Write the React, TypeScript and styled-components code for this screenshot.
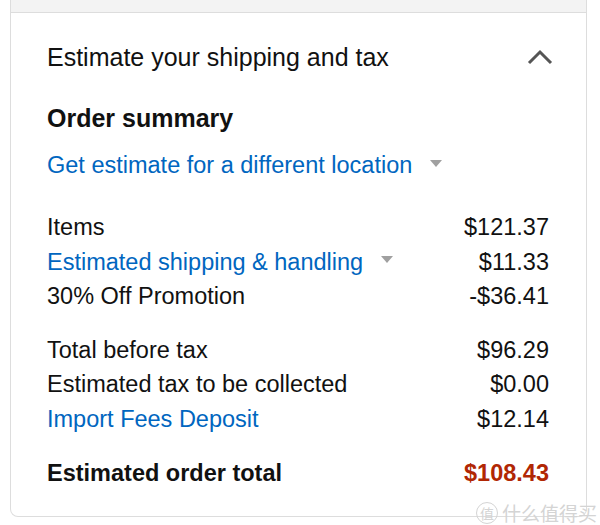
import styled, { createGlobalStyle } from "styled-components";

const GlobalStyle = createGlobalStyle`
  body {
    margin: 0;
    background: #fff;
    font-family: "Liberation Sans", Arial, sans-serif;
    color: #111;
  }
`;

const rows = [
  { label: "Items", value: "$121.37" },
  { label: "Estimated shipping & handling", value: "$11.33", link: true, caret: true },
  { label: "30% Off Promotion", value: "-$36.41" },
];

const rows2 = [
  { label: "Total before tax", value: "$96.29" },
  { label: "Estimated tax to be collected", value: "$0.00" },
  { label: "Import Fees Deposit", value: "$12.14", link: true },
];

const Caret = () => (
  <CaretSvg width="12" height="7" viewBox="0 0 12 7">
    <path d="M0 0 H12 L6 7 Z" fill="#a0a0a0" />
  </CaretSvg>
);

export default function App() {
  return (
    <Page>
      <GlobalStyle />
      <BoxGroup>
        <PrevBox />
        <Card>
          <Header>
            <Title>Estimate your shipping and tax</Title>
            <svg width="26" height="16" viewBox="0 0 26 16">
              <path d="M2 14 L13 3 L24 14" fill="none" stroke="#555" strokeWidth="3" />
            </svg>
          </Header>
          <Heading>Order summary</Heading>
          <LocationLink>
            <Link>Get estimate for a different location</Link>
            <Caret />
          </LocationLink>
          <Group>
            {rows.map((r) => (
              <Row key={r.label}>
                <Label>
                  {r.link ? <Link>{r.label}</Link> : r.label}
                  {r.caret && <Caret />}
                </Label>
                <Value>{r.value}</Value>
              </Row>
            ))}
          </Group>
          <Group>
            {rows2.map((r) => (
              <Row key={r.label}>
                <Label>{r.link ? <Link>{r.label}</Link> : r.label}</Label>
                <Value>{r.value}</Value>
              </Row>
            ))}
          </Group>
          <TotalRow>
            <span>Estimated order total</span>
            <Price>$108.43</Price>
          </TotalRow>
        </Card>
      </BoxGroup>
      <Watermark>
        <Circled>值</Circled>
        什么值得买
      </Watermark>
    </Page>
  );
}

const Page = styled.div`
  position: relative;
  height: 525px;
  overflow: hidden;
`;

const BoxGroup = styled.div`
  margin-left: 10px;
  width: 577px;
`;

const PrevBox = styled.div`
  height: 12px;
  background: #f3f3f3;
  border: 1px solid #ddd;
  border-top: none;
`;

const Card = styled.div`
  border: 1px solid #ddd;
  border-top: none;
  border-radius: 0 0 8px 8px;
  padding: 28px 37px 27px 36px;
  height: 504px;
  box-sizing: border-box;
`;

const Header = styled.div`
  display: flex;
  justify-content: space-between;
  align-items: center;
  height: 32px;
  margin-right: -4px;
`;

const Title = styled.div`
  font-size: 25px;
  line-height: 32px;
`;

const Heading = styled.div`
  margin-top: 30px;
  font-size: 25px;
  font-weight: bold;
  line-height: 30px;
`;

const Link = styled.span`
  color: #0066c0;
`;

const CaretSvg = styled.svg`
  margin-left: 18px;
  margin-bottom: 4px;
`;

const LocationLink = styled.div`
  margin-top: 15px;
  display: flex;
  align-items: center;
  font-size: 23.5px;
  line-height: 34px;
`;

const Group = styled.div`
  margin-top: 28px;
  & + & {
    margin-top: 19px;
  }
`;

const Row = styled.div`
  display: flex;
  justify-content: space-between;
  font-size: 23.5px;
  line-height: 34.5px;
`;

const Label = styled.div`
  display: flex;
  align-items: center;
`;

const Value = styled.div`
  text-align: right;
`;

const TotalRow = styled(Row)`
  margin-top: 20px;
  font-weight: bold;
`;

const Price = styled.span`
  color: #b12704;
`;

const Watermark = styled.div`
  position: absolute;
  right: 3px;
  bottom: 1px;
  display: flex;
  align-items: center;
  gap: 4px;
  font-family: "Noto Sans CJK SC", sans-serif;
  font-size: 19px;
  line-height: 22px;
  color: #d4d4d4;
`;

const Circled = styled.span`
  display: inline-flex;
  align-items: center;
  justify-content: center;
  width: 20px;
  height: 20px;
  border: 1.5px solid #d4d4d4;
  border-radius: 50%;
  font-size: 14px;
  line-height: 1;
`;
